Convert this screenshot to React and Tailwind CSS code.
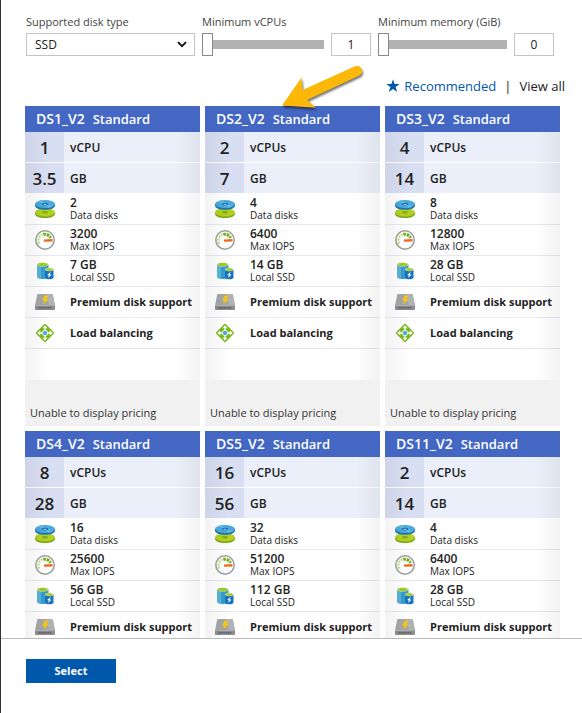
import { useState } from "react";

const SIZES = [
  { name: "DS1_V2", cpus: 1, gb: "3.5", disks: 2, iops: 3200, ssd: 7 },
  { name: "DS2_V2", cpus: 2, gb: "7", disks: 4, iops: 6400, ssd: 14 },
  { name: "DS3_V2", cpus: 4, gb: "14", disks: 8, iops: 12800, ssd: 28 },
  { name: "DS4_V2", cpus: 8, gb: "28", disks: 16, iops: 25600, ssd: 56 },
  { name: "DS5_V2", cpus: 16, gb: "56", disks: 32, iops: 51200, ssd: 112 },
  { name: "DS11_V2", cpus: 2, gb: "14", disks: 4, iops: 6400, ssd: 28 },
];

function DisksIcon() {
  return (
    <svg viewBox="0 0 20 20" className="size-5" aria-hidden="true">
      <path d="M0 13.400v1.500C0 17.200 4.500 19 10 19s10-1.800 10-4.100v-1.500z" fill="#7fa51c" />
      <ellipse cx="10" cy="13.400" rx="10" ry="4" fill="#b0d11e" />
      <ellipse cx="10" cy="13.200" rx="3" ry="1.200" fill="#86a81b" />
      <path d="M0 5v1.700C0 9 4.500 10.800 10 10.800S20 9 20 6.700V5z" fill="#1f74b5" />
      <ellipse cx="10" cy="5" rx="10" ry="4" fill="#4ba9dc" />
      <path d="M10 5 2.500 2.400A16 16 0 0 1 8 1.100zM10 5l8 2.300a14 14 0 0 1-5 1.500z" fill="#66b8e4" />
      <ellipse cx="10" cy="5" rx="3.200" ry="1.300" fill="#1f74b5" />
      <ellipse cx="10" cy="5.300" rx="1.600" ry="0.600" fill="#8ccbea" />
    </svg>
  );
}

function GaugeIcon() {
  return (
    <svg viewBox="0 0 20 20" className="size-5" aria-hidden="true">
      <circle cx="10" cy="10" r="9.200" fill="#fff" stroke="#9b9d9f" strokeWidth="1.500" />
      <path d="M4.300 13.500A6.300 6.300 0 0 1 7.500 4.400" fill="none" stroke="#b8dc72" strokeWidth="2" strokeDasharray="2 1" />
      <path d="M8.300 4.400A6 6 0 0 1 15.500 8" fill="none" stroke="#70ae16" strokeWidth="3" strokeDasharray="2.600 0.800" />
      <path d="M9 9.600 17.500 9v2.600l-8.500 0.200z" fill="#ee6820" />
    </svg>
  );
}

function StorageIcon() {
  return (
    <svg viewBox="0 0 20 20" className="size-5" aria-hidden="true">
      <path d="M2 3.500v12.300c0 1.200 2.500 2.200 5.700 2.200s5.800-1 5.800-2.200V3.500z" fill="#359bce" />
      <path d="M2 3.500v12.300c0 1 1.600 1.800 4 2.100V4z" fill="#59b4d9" />
      <ellipse cx="7.700" cy="3.500" rx="5.700" ry="2.100" fill="#e4efc0" />
      <ellipse cx="7.700" cy="3.500" rx="5" ry="1.700" fill="#a4ca24" />
      <path d="M10 8.500v8.200c0 .9 1.800 1.500 4.300 1.500s4.200-.6 4.200-1.500V8.500z" fill="#1673bd" />
      <ellipse cx="14.300" cy="8.500" rx="4.200" ry="1.700" fill="#e4efc0" />
      <ellipse cx="14.300" cy="8.500" rx="3.500" ry="1.300" fill="#a4ca24" />
      <path d="m15.800 10.800-3.600 3.100 1.700.4-1.100 2.700 3.700-3.200-1.800-.4z" fill="#fff" />
    </svg>
  );
}

function PremiumDiskIcon() {
  return (
    <svg viewBox="0 0 20 20" className="size-5" aria-hidden="true">
      <path d="M3.200 2h13.600c.6 0 1 .4 1.100.9L20 13.500H0L2.100 2.900c.1-.5.500-.9 1.100-.9z" fill="#a4a6a8" />
      <path d="M11 2h5.800c.6 0 1 .4 1.100.9L20 13.500h-6z" fill="#b0b2b4" />
      <path d="M0 13.500h20v3.700c0 .5-.4.800-.8.800H.8c-.4 0-.8-.3-.8-.8z" fill="#8b8d8f" />
      <path d="M3.500 15.800h13" stroke="#5d5f61" strokeWidth="1.500" strokeDasharray="1.400 .5" />
      <path d="M9.500 3.800h4L11.500 7h2.200l-5.400 5.500L9.500 8.700H7.200z" fill="#fcc80c" />
    </svg>
  );
}

function LoadBalancingIcon() {
  return (
    <svg viewBox="0 0 20 20" className="size-5" aria-hidden="true">
      <rect x="3.200" y="3.200" width="13.600" height="13.600" rx="1.200" transform="rotate(45 10 10)" fill="#7cb719" />
      <path d="M10 4v12M4 10h12" stroke="#fff" strokeWidth="1.300" />
      <path d="m10 2.200 2.400 3.100H7.600zM10 17.800l2.400-3.100H7.600zM2.200 10l3.100-2.400v4.800zM17.800 10l-3.100-2.400v4.800z" fill="#fff" />
      <circle cx="10" cy="10" r="2.900" fill="#fff" />
      <circle cx="10" cy="10" r="2.200" fill="#45aee0" />
    </svg>
  );
}

function HeadlineRow({ value, unit }) {
  return (
    <div className="flex h-[31px] items-stretch border-b border-white bg-[#ebeff9] text-[#222]">
      <div className="flex w-[39px] items-center justify-center bg-[#d9dff3] pt-0.5 text-[17px] leading-5 font-semibold">
        {value}
      </div>
      <div className="flex items-center pt-0.5 pl-1.5 text-[12px] leading-4 font-semibold">{unit}</div>
    </div>
  );
}

function FeatureRow({ icon, title, detail }) {
  return (
    <div className="flex h-[31px] items-center border-b border-[#e8e8f3] text-[#222]">
      <div className="flex w-[39px] justify-center">{icon}</div>
      {detail ? (
        <div className="pl-1.5 whitespace-nowrap">
          <div className="text-[12px] leading-3 font-semibold">{title}</div>
          <div className="text-[10px] leading-3 font-medium">{detail}</div>
        </div>
      ) : (
        <div className="pl-1.5 text-[11px] leading-4 font-bold whitespace-nowrap">{title}</div>
      )}
    </div>
  );
}

function SizeCard({ size, selected, onSelect }) {
  return (
    <button
      type="button"
      aria-pressed={selected}
      onClick={onSelect}
      className="block min-w-0 bg-white text-left"
    >
      <div className="flex h-[26px] items-center gap-2 bg-[#4467c4] pl-[11px] leading-5 font-semibold text-white">
        <span className="text-[14px]">{size.name}</span>
        <span className="text-[13px]">Standard</span>
      </div>
      <div className="relative">
        <HeadlineRow value={size.cpus} unit={size.cpus === 1 ? "vCPU" : "vCPUs"} />
        <HeadlineRow value={size.gb} unit="GB" />
        <FeatureRow icon={<DisksIcon />} title={size.disks} detail="Data disks" />
        <FeatureRow icon={<GaugeIcon />} title={size.iops} detail="Max IOPS" />
        <FeatureRow icon={<StorageIcon />} title={`${size.ssd} GB`} detail="Local SSD" />
        <FeatureRow icon={<PremiumDiskIcon />} title="Premium disk support" />
        <FeatureRow icon={<LoadBalancingIcon />} title="Load balancing" />
        <div className="h-[31px]" />
        <div className="pointer-events-none absolute inset-0 bg-[linear-gradient(to_right,rgba(0,0,0,0.05),transparent_14%,transparent_86%,rgba(0,0,0,0.05))]" />
      </div>
      <div className="flex h-[46px] items-end bg-[#f1f1f1] px-[5px] pb-1 text-[11px] leading-[18px] text-[#333]">
        Unable to display pricing
      </div>
    </button>
  );
}

function RangeField({ id, label, min, max, value, onChange }) {
  return (
    <div className="min-w-0">
      <label htmlFor={id} className="block text-[11px] leading-4 whitespace-nowrap text-[#444]">
        {label}
      </label>
      <div className="mt-[3px] flex items-center gap-[7px]">
        <input
          id={id}
          type="range"
          min={min}
          max={max}
          value={value}
          onChange={(e) => onChange(Number(e.target.value))}
          className="h-[23px] min-w-0 flex-1 appearance-none bg-transparent [&::-webkit-slider-runnable-track]:h-[9px] [&::-webkit-slider-runnable-track]:bg-[#b2b2b2] [&::-webkit-slider-thumb]:-mt-[7px] [&::-webkit-slider-thumb]:h-[23px] [&::-webkit-slider-thumb]:w-[11px] [&::-webkit-slider-thumb]:appearance-none [&::-webkit-slider-thumb]:border [&::-webkit-slider-thumb]:border-[#888] [&::-webkit-slider-thumb]:bg-white"
        />
        <input
          type="text"
          inputMode="numeric"
          aria-label={`${label} value`}
          value={value}
          onChange={(e) => onChange(Number(e.target.value) || min)}
          className="h-[23px] w-10 border border-[#c4c4c4] bg-white text-center text-[12px] leading-4 text-[#222]"
        />
      </div>
    </div>
  );
}

function PointerArrow() {
  return (
    <svg
      viewBox="0 0 84 48"
      className="pointer-events-none absolute top-[64px] left-[279px] h-12 w-[84px] drop-shadow-[1px_2px_1px_rgba(0,0,0,0.55)]"
      aria-hidden="true"
    >
      <path
        d="M2 41.500 21.500 13.500 22.500 26 75 2.200A5.200 5.200 0 0 1 79.500 11.500L27 36 36 43.800Z"
        fill="#fcb808"
      />
    </svg>
  );
}

export default function App() {
  const [disk, setDisk] = useState("SSD");
  const [cpus, setCpus] = useState(1);
  const [memory, setMemory] = useState(0);
  const [selected, setSelected] = useState(null);

  return (
    <div className="flex h-screen flex-col border-l border-[#333] bg-white font-['Open_Sans','Noto_Sans',sans-serif]">
      <main className="relative min-h-0 flex-1 overflow-hidden pr-[22px] pl-6">
        <form className="grid grid-cols-[169fr_169fr_176fr] gap-[7px] pt-3.5 pr-1.5 pl-px">
          <div className="min-w-0">
            <label htmlFor="disk-type" className="block text-[11px] leading-4 text-[#444]">
              Supported disk type
            </label>
            <div className="relative mt-[3px]">
              <select
                id="disk-type"
                value={disk}
                onChange={(e) => setDisk(e.target.value)}
                className="block h-[23px] w-full appearance-none border border-[#c4c4c4] bg-white pl-2 text-[12px] leading-4 text-[#222]"
              >
                <option>SSD</option>
                <option>HDD</option>
              </select>
              <svg
                viewBox="0 0 10 7"
                className="pointer-events-none absolute top-2 right-2 h-[7px] w-2.5"
                aria-hidden="true"
              >
                <path d="m1 1.200 4 4 4-4" fill="none" stroke="#111" strokeWidth="1.900" />
              </svg>
            </div>
          </div>
          <RangeField id="min-cpus" label="Minimum vCPUs" min={1} max={64} value={cpus} onChange={setCpus} />
          <RangeField id="min-memory" label="Minimum memory (GiB)" min={0} max={432} value={memory} onChange={setMemory} />
        </form>

        <div className="-mr-[5px] mt-5 flex h-5 items-center justify-end text-[13px] leading-5">
          <button type="button" className="flex items-center gap-1 text-[#0058ad]">
            <svg viewBox="0 0 14 14" className="size-3.5" aria-hidden="true">
              <path d="m7 .3 1.600 4.800h5.100L9.600 8.100l1.600 4.900L7 10l-4.200 3 1.600-4.900L.3 5.100h5.100z" fill="#0058ad" />
            </svg>
            Recommended
          </button>
          <span className="px-2 text-[#222]">|</span>
          <button type="button" className="text-[#222]">
            View all
          </button>
        </div>

        <div className="mt-2.5 grid grid-cols-3 gap-[5px]">
          {SIZES.map((size) => (
            <SizeCard
              key={size.name}
              size={size}
              selected={selected === size.name}
              onSelect={() => setSelected(size.name)}
            />
          ))}
        </div>
        <PointerArrow />
      </main>

      <footer className="h-[75px] shrink-0 border-t border-[#bbb] pt-5 pl-[25px]">
        <button type="button" className="block h-6 w-[90px] bg-[#0058ad] text-[11px] leading-4 font-bold text-white">
          Select
        </button>
      </footer>
    </div>
  );
}
